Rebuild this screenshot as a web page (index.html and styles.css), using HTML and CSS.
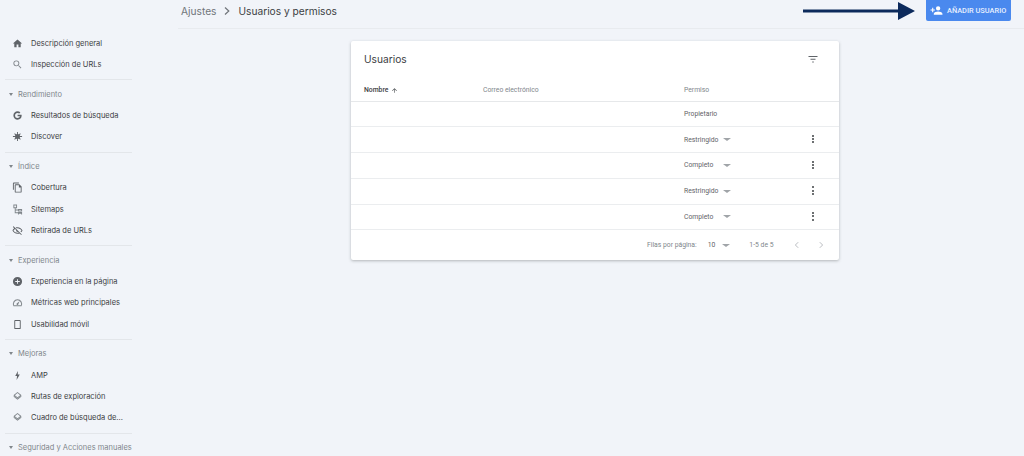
FILE: index.html
```html
<!DOCTYPE html>
<html lang="es">
<head>
<meta charset="utf-8">
<title>Usuarios y permisos</title>
<link rel="stylesheet" href="styles.css">
</head>
<body>
<div class="app">
  <nav class="sidebar">
    <section class="group">
      <a class="item"><svg class="ic" viewBox="0 0 24 24"><path d="M10 20v-6h4v6h5v-8h3L12 3 2 12h3v8z"/></svg>Descripción general</a>
      <a class="item"><svg class="ic light" viewBox="0 0 24 24"><path d="M15.5 14h-.79l-.28-.27A6.471 6.471 0 0 0 16 9.5 6.5 6.5 0 1 0 9.5 16c1.61 0 3.09-.59 4.23-1.57l.27.28v.79l5 4.99L20.490 19l-4.990-5zm-6 0C7.010 14 5 11.990 5 9.500S7.010 5 9.500 5 14 7.010 14 9.500 11.990 14 9.500 14z"/></svg>Inspección de URLs</a>
    </section>
    <section class="group">
      <h3 class="head"><span class="tri"></span>Rendimiento</h3>
      <a class="item"><svg class="ic" viewBox="0 0 24 24"><path d="M12.2 10.4v3.5h5c-.5 2.2-2.4 3.600-5 3.600a5.500 5.500 0 0 1 0-11c1.400 0 2.600.5 3.600 1.300l2.600-2.600A9.200 9.200 0 0 0 12.200 2.800a9.200 9.200 0 1 0 0 18.400c5.300 0 8.900-3.700 8.900-9 0-.6-.1-1.200-.2-1.800z"/></svg>Resultados de búsqueda</a>
      <a class="item"><svg class="ic" viewBox="0 0 24 24"><circle cx="12" cy="12" r="5.500"/><path d="M11 2h2v20h-2zM2 11h20v2H2zM4.900 6.300l1.400-1.400 12.800 12.800-1.400 1.400zM17.700 4.900l1.400 1.400L6.300 19.100l-1.400-1.400z"/></svg>Discover</a>
    </section>
    <section class="group">
      <h3 class="head"><span class="tri"></span>Índice</h3>
      <a class="item"><svg class="ic" viewBox="0 0 24 24"><path d="M15 1H4a2 2 0 0 0-2 2v14h2V3h11zm1 4H8a2 2 0 0 0-2 2v14a2 2 0 0 0 2 2h11a2 2 0 0 0 2-2V10zm3 16H8V7h7v5h4z"/></svg>Cobertura</a>
      <a class="item"><svg class="ic light" viewBox="0 0 24 24"><path d="M3 1h8v8H8v3h5v-1h9v5h-9v-2H8v4h5v-1h9v6h-9v-3H6V9H3zm2 2v4h4V3zm10 10v1h5v-1zm0 8v2h5v-2z"/></svg>Sitemaps</a>
      <a class="item"><svg class="ic" viewBox="0 0 24 24"><path d="M12 5c5 0 9 3 11 7-.7 1.500-1.700 2.800-3 3.900l-1.500-1.500c.9-.7 1.700-1.500 2.200-2.400C19 9 15.700 7 12 7c-.9 0-1.800.1-2.600.3L7.800 5.700C9.100 5.300 10.500 5 12 5zM3.400 2.600l18 18-1.400 1.400-3.400-3.400c-1.400.5-3 .4-4.600.4-5 0-9-3-11-7 .8-1.700 2-3.100 3.500-4.200L2 4zM6 9.200C4.900 10 4 11 3.300 12 5 15 8.300 17 12 17c1 0 2-.1 2.900-.4l-1.600-1.600A3.500 3.500 0 0 1 9 10.700L7.500 9.200z"/></svg>Retirada de URLs</a>
    </section>
    <section class="group">
      <h3 class="head"><span class="tri"></span>Experiencia</h3>
      <a class="item"><svg class="ic" viewBox="0 0 24 24"><path d="M12 2a10 10 0 1 0 0 20 10 10 0 0 0 0-20zm5 11h-4v4h-2v-4H7v-2h4V7h2v4h4z"/></svg>Experiencia en la página</a>
      <a class="item"><svg class="ic light" viewBox="0 0 24 24"><path d="M12 5a10 10 0 0 0-8.700 15h17.400A10 10 0 0 0 12 5zm7.500 13h-15a8 8 0 1 1 15 0zM16.500 9.500l-5.700 4.200a2 2 0 1 0 2.800 2.700z"/></svg>Métricas web principales</a>
      <a class="item"><svg class="ic" viewBox="0 0 24 24"><path d="M17 2H7a2 2 0 0 0-2 2v16a2 2 0 0 0 2 2h10a2 2 0 0 0 2-2V4a2 2 0 0 0-2-2zm0 17.500H7v-15h10z"/></svg>Usabilidad móvil</a>
    </section>
    <section class="group">
      <h3 class="head"><span class="tri"></span>Mejoras</h3>
      <a class="item"><svg class="ic" viewBox="0 0 24 24"><path d="M13 2 7 13h4l-1 9 7-12h-4.500z"/></svg>AMP</a>
      <a class="item"><svg class="ic light" viewBox="0 0 24 24"><path d="m12 16.500-7.400-5.700L3 12l9 7 9-7-1.600-1.200zM12 2 3 9l9 7 9-7zm0 11.500L6.300 9 12 4.500 17.700 9z"/></svg>Rutas de exploración</a>
      <a class="item"><svg class="ic light" viewBox="0 0 24 24"><path d="m12 16.500-7.400-5.700L3 12l9 7 9-7-1.600-1.200zM12 2 3 9l9 7 9-7zm0 11.500L6.300 9 12 4.500 17.700 9z"/></svg>Cuadro de búsqueda de...</a>
    </section>
    <section class="group last">
      <h3 class="head"><span class="tri"></span>Seguridad y Acciones manuales</h3>
    </section>
  </nav>

  <main class="main">
    <header class="topbar">
      <div class="crumbs"><span>Ajustes</span><svg class="chev" viewBox="0 0 10 10"><path d="M3 1.500 6.800 5 3 8.500" fill="none" stroke="currentColor" stroke-width="1.200"/></svg><span class="current">Usuarios y permisos</span></div>
      <button class="add"><svg class="add-ic" viewBox="0 0 24 24"><path d="M15 12a4 4 0 1 0 0-8 4 4 0 0 0 0 8zm-9-2V7H4v3H1v2h3v3h2v-3h3v-2zm9 4c-2.700 0-8 1.300-8 4v2h16v-2c0-2.700-5.300-4-8-4z"/></svg>AÑADIR USUARIO</button>
    </header>

    <section class="card">
      <div class="card-top">
        <h2 class="card-title">Usuarios</h2>
        <svg class="filter" viewBox="0 0 24 24"><path d="M3 6h18v2H3zm4 5.500h10v2H7zm3.500 5.500h3v2h-3z"/></svg>
      </div>
      <div class="row row-head">
        <div class="strong">Nombre <svg class="sort" viewBox="0 0 24 24"><path d="M11 20V7.800l-5.600 5.600L4 12l8-8 8 8-1.400 1.400L13 7.800V20z"/></svg></div>
        <div>Correo electrónico</div>
        <div>Permiso</div>
        <div></div>
      </div>
      <div class="row"><div></div><div></div><div>Propietario</div><div></div></div>
      <div class="row"><div></div><div></div><div class="perm"><span class="perm-label">Restringido</span><span class="caret"></span></div><div class="kebab"><i></i><i></i><i></i></div></div>
      <div class="row"><div></div><div></div><div class="perm"><span class="perm-label">Completo</span><span class="caret"></span></div><div class="kebab"><i></i><i></i><i></i></div></div>
      <div class="row"><div></div><div></div><div class="perm"><span class="perm-label">Restringido</span><span class="caret"></span></div><div class="kebab"><i></i><i></i><i></i></div></div>
      <div class="row"><div></div><div></div><div class="perm"><span class="perm-label">Completo</span><span class="caret"></span></div><div class="kebab"><i></i><i></i><i></i></div></div>
      <footer class="pager">
        <span>Filas por página:</span>
        <span class="size">10</span><span class="caret"></span>
        <span class="range">1-5 de 5</span>
        <svg class="nav-ic" viewBox="0 0 10 10"><path d="M6.500 1.500 3 5l3.500 3.500" fill="none" stroke="currentColor" stroke-width="1.100"/></svg>
        <svg class="nav-ic next" viewBox="0 0 10 10"><path d="M3.500 1.500 7 5 3.500 8.500" fill="none" stroke="currentColor" stroke-width="1.100"/></svg>
      </footer>
    </section>

    <svg class="arrow" viewBox="0 0 112 18"><path d="M0 7.500h95V0l17 9-17 9v-7.500H0z"/></svg>
  </main>
</div>
</body>
</html>
```
FILE: styles.css
```css
* { box-sizing: border-box; }
html, body { margin: 0; height: 100%; }
body {
  background: #f1f4f9;
  font-family: Inter, "Liberation Sans", sans-serif;
  color: #3c4043;
  overflow: hidden;
}
.app { display: flex; height: 456px; overflow: hidden; }

.sidebar { width: 178px; flex: none; padding-top: 32.500px; }
.group { width: 127px; margin-left: 5px; padding-bottom: 4px; border-bottom: 1px solid #e3e6ea; margin-bottom: 6px; }
.group.last { border-bottom: 0; }
.item {
  display: flex;
  align-items: center;
  height: 21.400px;
  padding-left: 6.500px;
  font-size: 7.500px;
  white-space: nowrap;
  color: #3c4043;
}
.ic { width: 11px; height: 11px; margin-right: 8.500px; fill: #5f6368; flex: none; }
.ic.light { fill: #80868b; }
.head {
  display: flex;
  align-items: center;
  height: 16px;
  margin: 0 0 2.500px;
  font-size: 7.500px;
  font-weight: 400;
  white-space: nowrap;
  color: #80868b;
}
.tri {
  width: 0;
  height: 0;
  margin: 0 5.500px 0 3.500px;
  border: 2.500px solid transparent;
  border-top: 3px solid #80868b;
  border-bottom: 0;
}

.main { position: relative; flex: 1; min-width: 0; }
.topbar {
  display: flex;
  justify-content: space-between;
  align-items: flex-start;
  height: 29px;
  padding: 0 13px 0 3px;
  border-bottom: 1px solid #e8ebef;
}
.crumbs { display: flex; align-items: center; height: 22px; font-size: 10.200px; color: #70757a; }
.chev { width: 10px; height: 10px; margin: 0 6px 0 6px; color: #70757a; }
.current { color: #3c4043; }
.add {
  display: flex;
  align-items: center;
  width: 85px;
  height: 21px;
  padding: 0 0 0 4px;
  border: 0;
  border-radius: 0 0 2px 2px;
  background: #4a89ee;
  color: #e8f0fe;
  font: 500 7.400px Roboto, sans-serif;
  white-space: nowrap;
}
.add-ic { width: 13px; height: 13px; margin-right: 4px; fill: #fff; flex: none; }
.arrow { position: absolute; left: 625px; top: 2px; width: 112px; height: 18px; fill: #0c2a5c; }

.card {
  width: 488px;
  margin: 12px 0 0 173px;
  background: #fff;
  border-radius: 2px;
  box-shadow: 0 1px 3px rgba(60, 64, 67, .35);
}
.card-top { display: flex; justify-content: space-between; align-items: center; height: 35px; padding: 0 20px 0 13px; }
.card-title { margin: 0; font-size: 10.200px; font-weight: 400; color: #3c4043; }
.filter { width: 12px; height: 12px; fill: #5f6368; }
.row {
  display: grid;
  grid-template-columns: 119px 201px 128px 1fr;
  align-items: center;
  height: 25.750px;
  padding-left: 13px;
  font-family: Roboto, sans-serif;
  font-size: 6.800px;
  color: #5f6368;
  border-bottom: 1px solid #ebedef;
}
.row-head { height: 25.500px; padding-top: 4px; border-bottom-color: #e6e8ea; color: #80868b; }
.strong { display: flex; align-items: center; gap: 3px; font-weight: 500; color: #3c4043; }
.sort { width: 7px; height: 7px; fill: #3c4043; }
.perm { display: flex; align-items: center; }
.perm-label { width: 39px; }
.caret {
  display: inline-block;
  width: 0;
  height: 0;
  border: 4px solid transparent;
  border-top: 3.500px solid #a0a4a8;
  border-bottom: 0;
}
.kebab { display: flex; flex-direction: column; align-items: flex-start; gap: 1.300px; margin-top: -1px; }
.kebab i { width: 2px; height: 2px; border-radius: 50%; background: #3c4043; }
.pager {
  display: flex;
  align-items: center;
  height: 30px;
  padding-left: 296px;
  font-family: Roboto, sans-serif;
  font-size: 6.800px;
  color: #80868b;
}
.size { margin: 0 7px 0 11px; color: #5f6368; }
.range { margin: 0 19px 0 19px; }
.nav-ic { width: 8px; height: 8px; color: #b0b4b8; }
.nav-ic.next { margin-left: 16px; }
```
